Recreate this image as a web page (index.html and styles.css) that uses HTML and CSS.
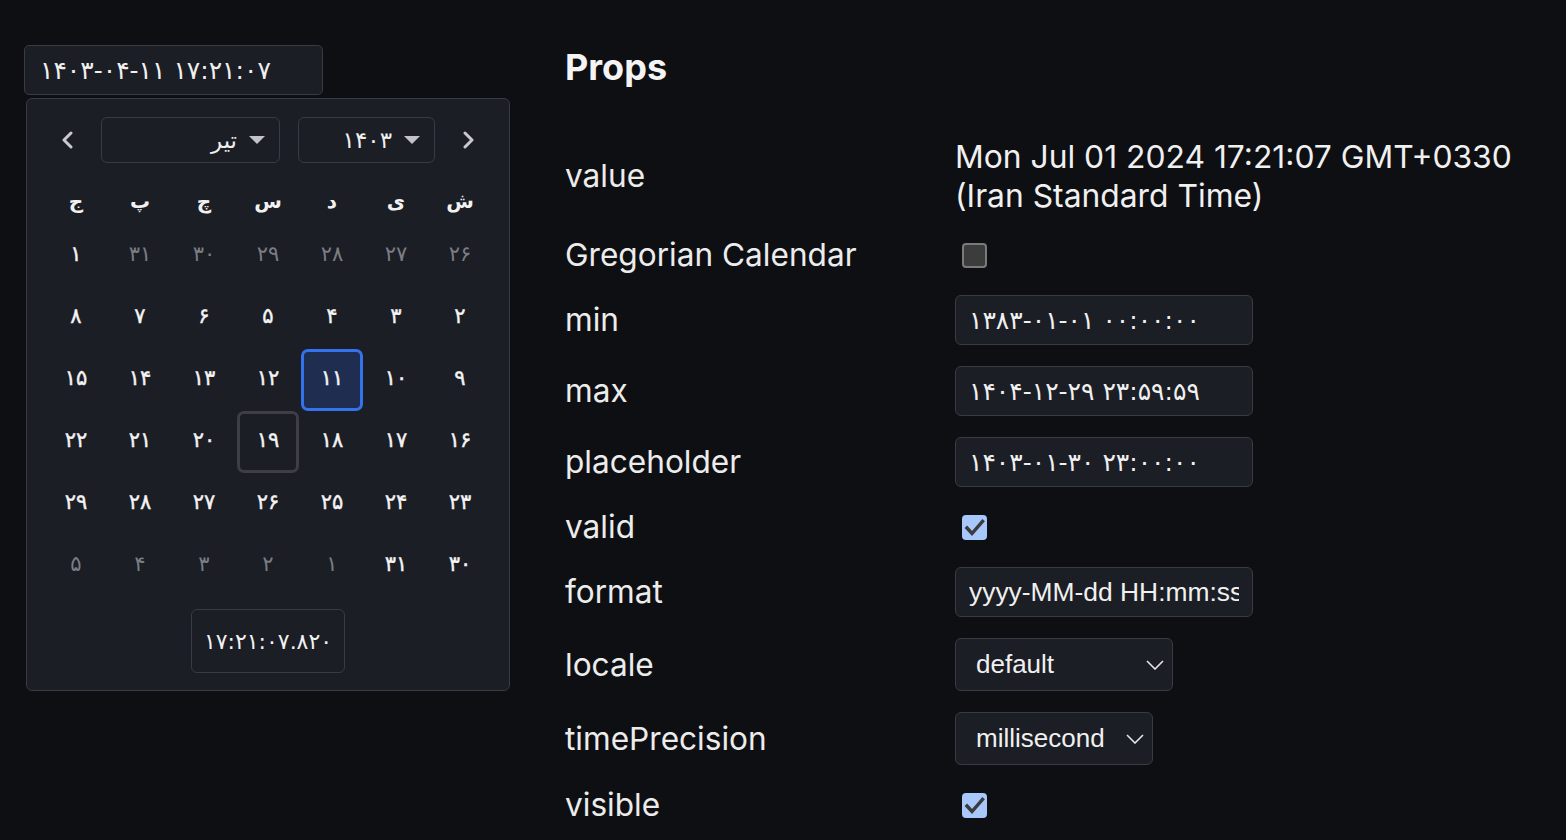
FILE: index.html
```html
<!DOCTYPE html>
<html lang="en">
<head>
<meta charset="utf-8">
<title>Persian DateTime Picker</title>
<link rel="stylesheet" href="styles.css">
</head>
<body>
<div class="page">
  <div class="left">
    <input class="date-input fa" type="text" value="۱۴۰۳-۰۴-۱۱ ۱۷:۲۱:۰۷">
    <div class="calendar">
      <div class="cal-header">
        <button class="nav-btn" aria-label="previous"><svg width="14" height="18" viewBox="0 0 14 18"><polyline points="10,2 3,9 10,16" fill="none" stroke="#c9cacd" stroke-width="3" stroke-linecap="round" stroke-linejoin="round"/></svg></button>
        <div class="cal-select month"><span>تیر</span><svg width="16" height="8" viewBox="0 0 16 8"><polygon points="0,0 16,0 8,8" fill="#c2c3c6"/></svg></div>
        <div class="cal-select year"><span>۱۴۰۳</span><svg width="16" height="8" viewBox="0 0 16 8"><polygon points="0,0 16,0 8,8" fill="#c2c3c6"/></svg></div>
        <button class="nav-btn" aria-label="next"><svg width="14" height="18" viewBox="0 0 14 18"><polyline points="4,2 11,9 4,16" fill="none" stroke="#c9cacd" stroke-width="3" stroke-linecap="round" stroke-linejoin="round"/></svg></button>
      </div>
      <div class="grid weekdays" dir="rtl">
        <div class="wd">ش</div><div class="wd">ی</div><div class="wd">د</div><div class="wd">س</div><div class="wd">چ</div><div class="wd">پ</div><div class="wd">ج</div>
      </div>
      <div class="grid days" dir="rtl">
        <div class="day muted">۲۶</div><div class="day muted">۲۷</div><div class="day muted">۲۸</div><div class="day muted">۲۹</div><div class="day muted">۳۰</div><div class="day muted">۳۱</div><div class="day">۱</div>
        <div class="day">۲</div><div class="day">۳</div><div class="day">۴</div><div class="day">۵</div><div class="day">۶</div><div class="day">۷</div><div class="day">۸</div>
        <div class="day">۹</div><div class="day">۱۰</div><div class="day selected">۱۱</div><div class="day">۱۲</div><div class="day">۱۳</div><div class="day">۱۴</div><div class="day">۱۵</div>
        <div class="day">۱۶</div><div class="day">۱۷</div><div class="day">۱۸</div><div class="day today">۱۹</div><div class="day">۲۰</div><div class="day">۲۱</div><div class="day">۲۲</div>
        <div class="day">۲۳</div><div class="day">۲۴</div><div class="day">۲۵</div><div class="day">۲۶</div><div class="day">۲۷</div><div class="day">۲۸</div><div class="day">۲۹</div>
        <div class="day">۳۰</div><div class="day">۳۱</div><div class="day muted">۱</div><div class="day muted">۲</div><div class="day muted">۳</div><div class="day muted">۴</div><div class="day muted">۵</div>
      </div>
      <div class="time-row"><input class="time-input" type="text" value="۱۷:۲۱:۰۷.۸۲۰"></div>
    </div>
  </div>
  <div class="right">
    <h2 class="title">Props</h2>
    <div class="props">
      <div class="label">value</div>
      <div class="value-text">Mon Jul 01 2024 17:21:07 GMT+0330 (Iran Standard Time)</div>

      <div class="label">Gregorian Calendar</div>
      <div class="cb-cell"><span class="cb"></span></div>

      <div class="label">min</div>
      <div><input class="field fa" type="text" value="۱۳۸۳-۰۱-۰۱ ۰۰:۰۰:۰۰"></div>

      <div class="label">max</div>
      <div><input class="field fa" type="text" value="۱۴۰۴-۱۲-۲۹ ۲۳:۵۹:۵۹"></div>

      <div class="label">placeholder</div>
      <div><input class="field fa" type="text" value="۱۴۰۳-۰۱-۳۰ ۲۳:۰۰:۰۰"></div>

      <div class="label">valid</div>
      <div class="cb-cell"><span class="cb checked"><svg width="25" height="25" viewBox="0 0 25 25"><polyline points="5,13 10,18.5 20.5,6.5" fill="none" stroke="#3a3b3d" stroke-width="3.4" stroke-linecap="square"/></svg></span></div>

      <div class="label">format</div>
      <div><input class="field latin" type="text" value="yyyy-MM-dd HH:mm:ss.SSS"></div>

      <div class="label">locale</div>
      <div><div class="select locale"><span>default</span><svg width="18" height="10" viewBox="0 0 18 10"><polyline points="1,1 9,9 17,1" fill="none" stroke="#e6e6e6" stroke-width="1.6"/></svg></div></div>

      <div class="label">timePrecision</div>
      <div><div class="select precision"><span>millisecond</span><svg width="18" height="10" viewBox="0 0 18 10"><polyline points="1,1 9,9 17,1" fill="none" stroke="#e6e6e6" stroke-width="1.6"/></svg></div></div>

      <div class="label">visible</div>
      <div class="cb-cell"><span class="cb checked"><svg width="25" height="25" viewBox="0 0 25 25"><polyline points="5,13 10,18.5 20.5,6.5" fill="none" stroke="#3a3b3d" stroke-width="3.4" stroke-linecap="square"/></svg></span></div>
    </div>
  </div>
</div>
</body>
</html>
```

FILE: styles.css
```css
html, body {
  margin: 0;
  background: #0e0f13;
}

body {
  color: #ececec;
  font-family: Inter, "Liberation Sans", sans-serif;
}

.page {
  display: flex;
  align-items: flex-start;
  padding: 45px 0 0 24px;
}

.left {
  width: 486px;
  flex: none;
}

.right {
  margin-left: 55px;
  width: 985px;
  flex: none;
}

.fa {
  font-family: "DejaVu Sans", sans-serif;
  font-size: 25px;
}

.date-input {
  display: block;
  width: 299px;
  height: 50px;
  box-sizing: border-box;
  margin: 0;
  padding: 0 15px;
  background: #1c1e25;
  color: #f0f0f0;
  border: 1px solid #393b44;
  border-radius: 5px;
  outline: none;
}

.calendar {
  margin: 3px 0 0 2px;
  width: 484px;
  box-sizing: border-box;
  background: #1c1e25;
  border: 1px solid #393b44;
  border-radius: 6px;
  padding: 18px 17px 17px;
}

.cal-header {
  display: flex;
  align-items: center;
  height: 46px;
  margin-bottom: 16px;
}

.nav-btn {
  width: 48px;
  height: 46px;
  padding: 0;
  border: 0;
  background: none;
  display: flex;
  align-items: center;
  justify-content: center;
}

.cal-select {
  height: 46px;
  box-sizing: border-box;
  border: 1px solid #393b44;
  border-radius: 6px;
  display: flex;
  align-items: center;
  justify-content: flex-end;
  gap: 12px;
  padding-right: 14px;
  font-family: "DejaVu Sans", sans-serif;
  font-size: 23px;
  color: #f0f0f0;
}

.cal-select.month {
  width: 179px;
  margin-left: 9px;
}

.cal-select.year {
  width: 137px;
  margin-left: 18px;
  margin-right: 9px;
}

.grid {
  display: grid;
  grid-template-columns: repeat(7, 62px);
  column-gap: 2px;
  justify-content: center;
}

.weekdays {
  height: 46px;
  align-items: center;
  padding-bottom: 2px;
  box-sizing: border-box;
}

.wd {
  text-align: center;
  font-family: "DejaVu Sans", sans-serif;
  font-weight: bold;
  font-size: 20px;
  color: #f2f2f2;
}

.day {
  height: 62px;
  box-sizing: border-box;
  border: 3px solid transparent;
  border-radius: 7px;
  padding-bottom: 4px;
  display: flex;
  align-items: center;
  justify-content: center;
  font-family: "DejaVu Sans", sans-serif;
  font-size: 21px;
  color: #f4f4f4;
  -webkit-text-stroke: 0.4px #f4f4f4;
}

.day.muted {
  color: #7b7d84;
  -webkit-text-stroke: 0;
}

.day.selected {
  border-color: #3472ee;
  background: #1f2d50;
}

.day.today {
  border-color: #3e3f45;
}

.time-row {
  display: flex;
  justify-content: center;
  margin-top: 12px;
}

.time-input {
  width: 154px;
  height: 64px;
  box-sizing: border-box;
  margin: 0;
  padding: 0;
  text-align: center;
  background: #1c1e25;
  color: #f2f2f2;
  border: 1px solid #393b44;
  border-radius: 6px;
  font-family: "DejaVu Sans", sans-serif;
  font-size: 22px;
  outline: none;
}

.title {
  margin: 0 0 48px;
  font-size: 36px;
  line-height: 44px;
  font-weight: 700;
  color: #f4f4f4;
}

.props {
  display: grid;
  grid-template-columns: 390px 1fr;
  row-gap: 21px;
  align-items: center;
}

.label {
  font-size: 31.6px;
  line-height: 38px;
  color: #ececec;
}

.value-text {
  font-size: 31.8px;
  line-height: 39px;
  color: #f0f0f0;
}

.cb-cell {
  height: 38px;
  display: flex;
  align-items: center;
}

.cb {
  display: block;
  width: 25px;
  height: 25px;
  box-sizing: border-box;
  margin-left: 7px;
  border-radius: 4px;
  background: #3c3c3c;
  border: 2px solid #7a7a7a;
}

.cb.checked {
  background: #a8c7fa;
  border: 0;
}

.cb svg {
  display: block;
}

.field {
  display: block;
  width: 298px;
  height: 50px;
  box-sizing: border-box;
  margin: 0;
  padding: 0 13px;
  background: #1c1e25;
  color: #f0f0f0;
  border: 1px solid #393b44;
  border-radius: 6px;
  outline: none;
}

.field.latin {
  font-family: "Liberation Sans", Arial, sans-serif;
  font-size: 26.4px;
}

.select {
  height: 53px;
  box-sizing: border-box;
  display: flex;
  align-items: center;
  justify-content: space-between;
  padding: 0 8px 0 20px;
  background: #1c1e25;
  border: 1px solid #393b44;
  border-radius: 6px;
  font-family: "Liberation Sans", Arial, sans-serif;
  font-size: 26px;
  color: #f0f0f0;
}

.select.locale {
  width: 218px;
}

.select.precision {
  width: 198px;
}
```
